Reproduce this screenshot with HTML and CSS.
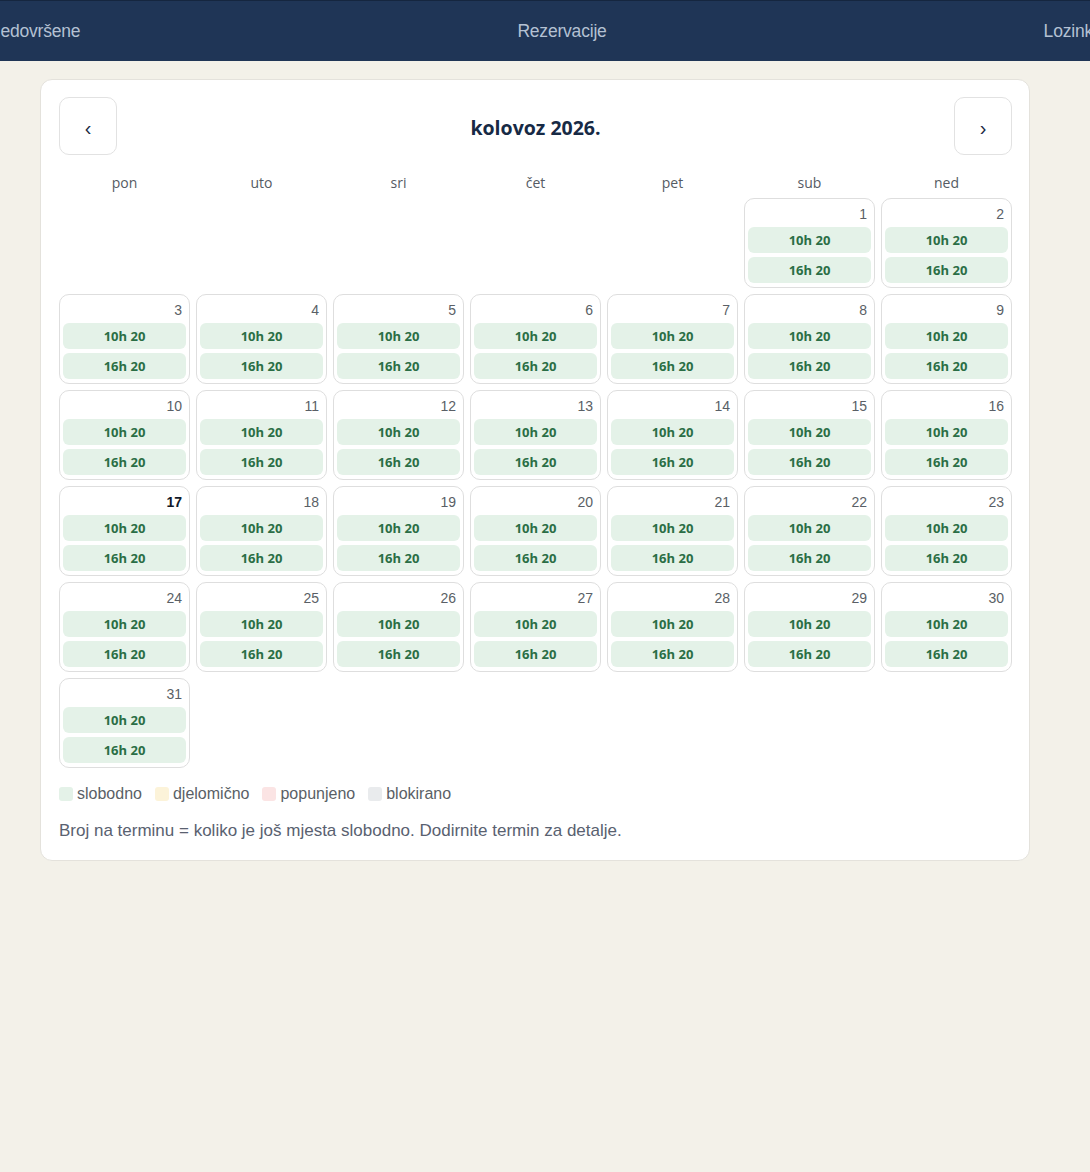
FILE: index.html
```html
<!DOCTYPE html>
<html lang="hr">
<head>
<meta charset="utf-8">
<title>Rezervacije</title>
<link rel="stylesheet" href="styles.css">
</head>
<body>
<header class="topbar">
  <nav class="nav">
    <a class="nav-item">Nedovršene</a>
    <a class="nav-item">Rezervacije</a>
    <a class="nav-item">Lozinka</a>
  </nav>
</header>
<main class="page">
  <section class="card">
    <div class="cal-head">
      <button class="nav-btn">&#8249;</button>
      <h2 class="month">kolovoz 2026.</h2>
      <button class="nav-btn">&#8250;</button>
    </div>
    <div class="grid">
      <div class="dow">pon</div><div class="dow">uto</div><div class="dow">sri</div><div class="dow">čet</div><div class="dow">pet</div><div class="dow">sub</div><div class="dow">ned</div>

      <div class="empty"></div><div class="empty"></div><div class="empty"></div><div class="empty"></div><div class="empty"></div>
      <div class="day"><span class="num">1</span><span class="slot">10h 20</span><span class="slot">16h 20</span></div>
      <div class="day"><span class="num">2</span><span class="slot">10h 20</span><span class="slot">16h 20</span></div>

      <div class="day"><span class="num">3</span><span class="slot">10h 20</span><span class="slot">16h 20</span></div>
      <div class="day"><span class="num">4</span><span class="slot">10h 20</span><span class="slot">16h 20</span></div>
      <div class="day"><span class="num">5</span><span class="slot">10h 20</span><span class="slot">16h 20</span></div>
      <div class="day"><span class="num">6</span><span class="slot">10h 20</span><span class="slot">16h 20</span></div>
      <div class="day"><span class="num">7</span><span class="slot">10h 20</span><span class="slot">16h 20</span></div>
      <div class="day"><span class="num">8</span><span class="slot">10h 20</span><span class="slot">16h 20</span></div>
      <div class="day"><span class="num">9</span><span class="slot">10h 20</span><span class="slot">16h 20</span></div>

      <div class="day"><span class="num">10</span><span class="slot">10h 20</span><span class="slot">16h 20</span></div>
      <div class="day"><span class="num">11</span><span class="slot">10h 20</span><span class="slot">16h 20</span></div>
      <div class="day"><span class="num">12</span><span class="slot">10h 20</span><span class="slot">16h 20</span></div>
      <div class="day"><span class="num">13</span><span class="slot">10h 20</span><span class="slot">16h 20</span></div>
      <div class="day"><span class="num">14</span><span class="slot">10h 20</span><span class="slot">16h 20</span></div>
      <div class="day"><span class="num">15</span><span class="slot">10h 20</span><span class="slot">16h 20</span></div>
      <div class="day"><span class="num">16</span><span class="slot">10h 20</span><span class="slot">16h 20</span></div>

      <div class="day today"><span class="num">17</span><span class="slot">10h 20</span><span class="slot">16h 20</span></div>
      <div class="day"><span class="num">18</span><span class="slot">10h 20</span><span class="slot">16h 20</span></div>
      <div class="day"><span class="num">19</span><span class="slot">10h 20</span><span class="slot">16h 20</span></div>
      <div class="day"><span class="num">20</span><span class="slot">10h 20</span><span class="slot">16h 20</span></div>
      <div class="day"><span class="num">21</span><span class="slot">10h 20</span><span class="slot">16h 20</span></div>
      <div class="day"><span class="num">22</span><span class="slot">10h 20</span><span class="slot">16h 20</span></div>
      <div class="day"><span class="num">23</span><span class="slot">10h 20</span><span class="slot">16h 20</span></div>

      <div class="day"><span class="num">24</span><span class="slot">10h 20</span><span class="slot">16h 20</span></div>
      <div class="day"><span class="num">25</span><span class="slot">10h 20</span><span class="slot">16h 20</span></div>
      <div class="day"><span class="num">26</span><span class="slot">10h 20</span><span class="slot">16h 20</span></div>
      <div class="day"><span class="num">27</span><span class="slot">10h 20</span><span class="slot">16h 20</span></div>
      <div class="day"><span class="num">28</span><span class="slot">10h 20</span><span class="slot">16h 20</span></div>
      <div class="day"><span class="num">29</span><span class="slot">10h 20</span><span class="slot">16h 20</span></div>
      <div class="day"><span class="num">30</span><span class="slot">10h 20</span><span class="slot">16h 20</span></div>

      <div class="day"><span class="num">31</span><span class="slot">10h 20</span><span class="slot">16h 20</span></div>
    </div>
    <div class="legend">
      <span class="leg"><i class="sw sw-free"></i>slobodno</span>
      <span class="leg"><i class="sw sw-part"></i>djelomično</span>
      <span class="leg"><i class="sw sw-full"></i>popunjeno</span>
      <span class="leg"><i class="sw sw-block"></i>blokirano</span>
    </div>
    <p class="hint">Broj na terminu = koliko je još mjesta slobodno. Dodirnite termin za detalje.</p>
  </section>
</main>
</body>
</html>
```
FILE: styles.css
```css
* { box-sizing: border-box; }
html, body { margin: 0; padding: 0; }
body {
  background: #f3f1e9;
  font-family: "Liberation Sans", Arial, sans-serif;
  color: #1b2a44;
  min-height: 1172px;
}
.topbar {
  height: 61px;
  background: #1f3556;
  border-top: 1px solid #15263f;
  overflow: hidden;
}
.nav {
  display: flex;
  gap: 437px;
  margin-left: -12px;
  height: 60px;
  align-items: center;
  white-space: nowrap;
}
.nav-item {
  color: #b4c1d3;
  font-size: 17.5px;
  letter-spacing: -0.2px;
}
.page {
  padding: 18px 60px 0 40px;
}
.card {
  width: 990px;
  background: #fff;
  border: 1px solid #e4e2dc;
  border-radius: 12px;
  padding: 17px 17px 19px 18px;
}
.cal-head {
  display: flex;
  justify-content: space-between;
  align-items: center;
}
.nav-btn {
  width: 58px;
  height: 58px;
  border: 1px solid #e2e2e2;
  border-radius: 10px;
  background: #fff;
  color: #1b2a44;
  font-size: 20px;
  font-family: "Liberation Sans", Arial, sans-serif;
  padding: 4px 0 0;
}
.month {
  margin: 3px 0 0;
  font-size: 19.5px;
  font-weight: 700;
  color: #172a45;
  font-family: "Open Sans", "Liberation Sans", sans-serif;
}
.grid {
  margin-top: 18px;
  display: grid;
  grid-template-columns: repeat(7, 131px);
  grid-auto-rows: 90px;
  grid-template-rows: 19px;
  gap: 6px;
}
.dow {
  text-align: center;
  font-size: 14px;
  color: #555b63;
  font-family: "Open Sans", "Liberation Sans", sans-serif;
  line-height: 20px;
}
.day {
  border: 1px solid #dedede;
  border-radius: 10px;
  padding: 3px;
  display: flex;
  flex-direction: column;
  gap: 4px;
}
.num {
  text-align: right;
  font-size: 14px;
  color: #5a5f66;
  height: 22px;
  line-height: 24px;
  padding-right: 4px;
  margin-bottom: -1px;
}
.today .num {
  font-weight: 700;
  color: #111a2a;
}
.slot {
  height: 26px;
  background: #e4f2e8;
  border-radius: 6px;
  color: #2a6e45;
  font-weight: 700;
  font-size: 13px;
  display: flex;
  align-items: center;
  justify-content: center;
  font-family: "Open Sans", "Liberation Sans", sans-serif;
}
.legend {
  display: flex;
  gap: 13px;
  margin-top: 17px;
  font-size: 16px;
  color: #5a5f66;
}
.leg {
  display: flex;
  align-items: center;
  gap: 4px;
}
.sw {
  width: 14px;
  height: 14px;
  border-radius: 3px;
  display: inline-block;
}
.sw-free { background: #e4f2e8; }
.sw-part { background: #fcf3d9; }
.sw-full { background: #fbe4e4; }
.sw-block { background: #e9ebed; }
.hint {
  margin: 18px 0 0;
  font-size: 17px;
  color: #596170;
}
```
